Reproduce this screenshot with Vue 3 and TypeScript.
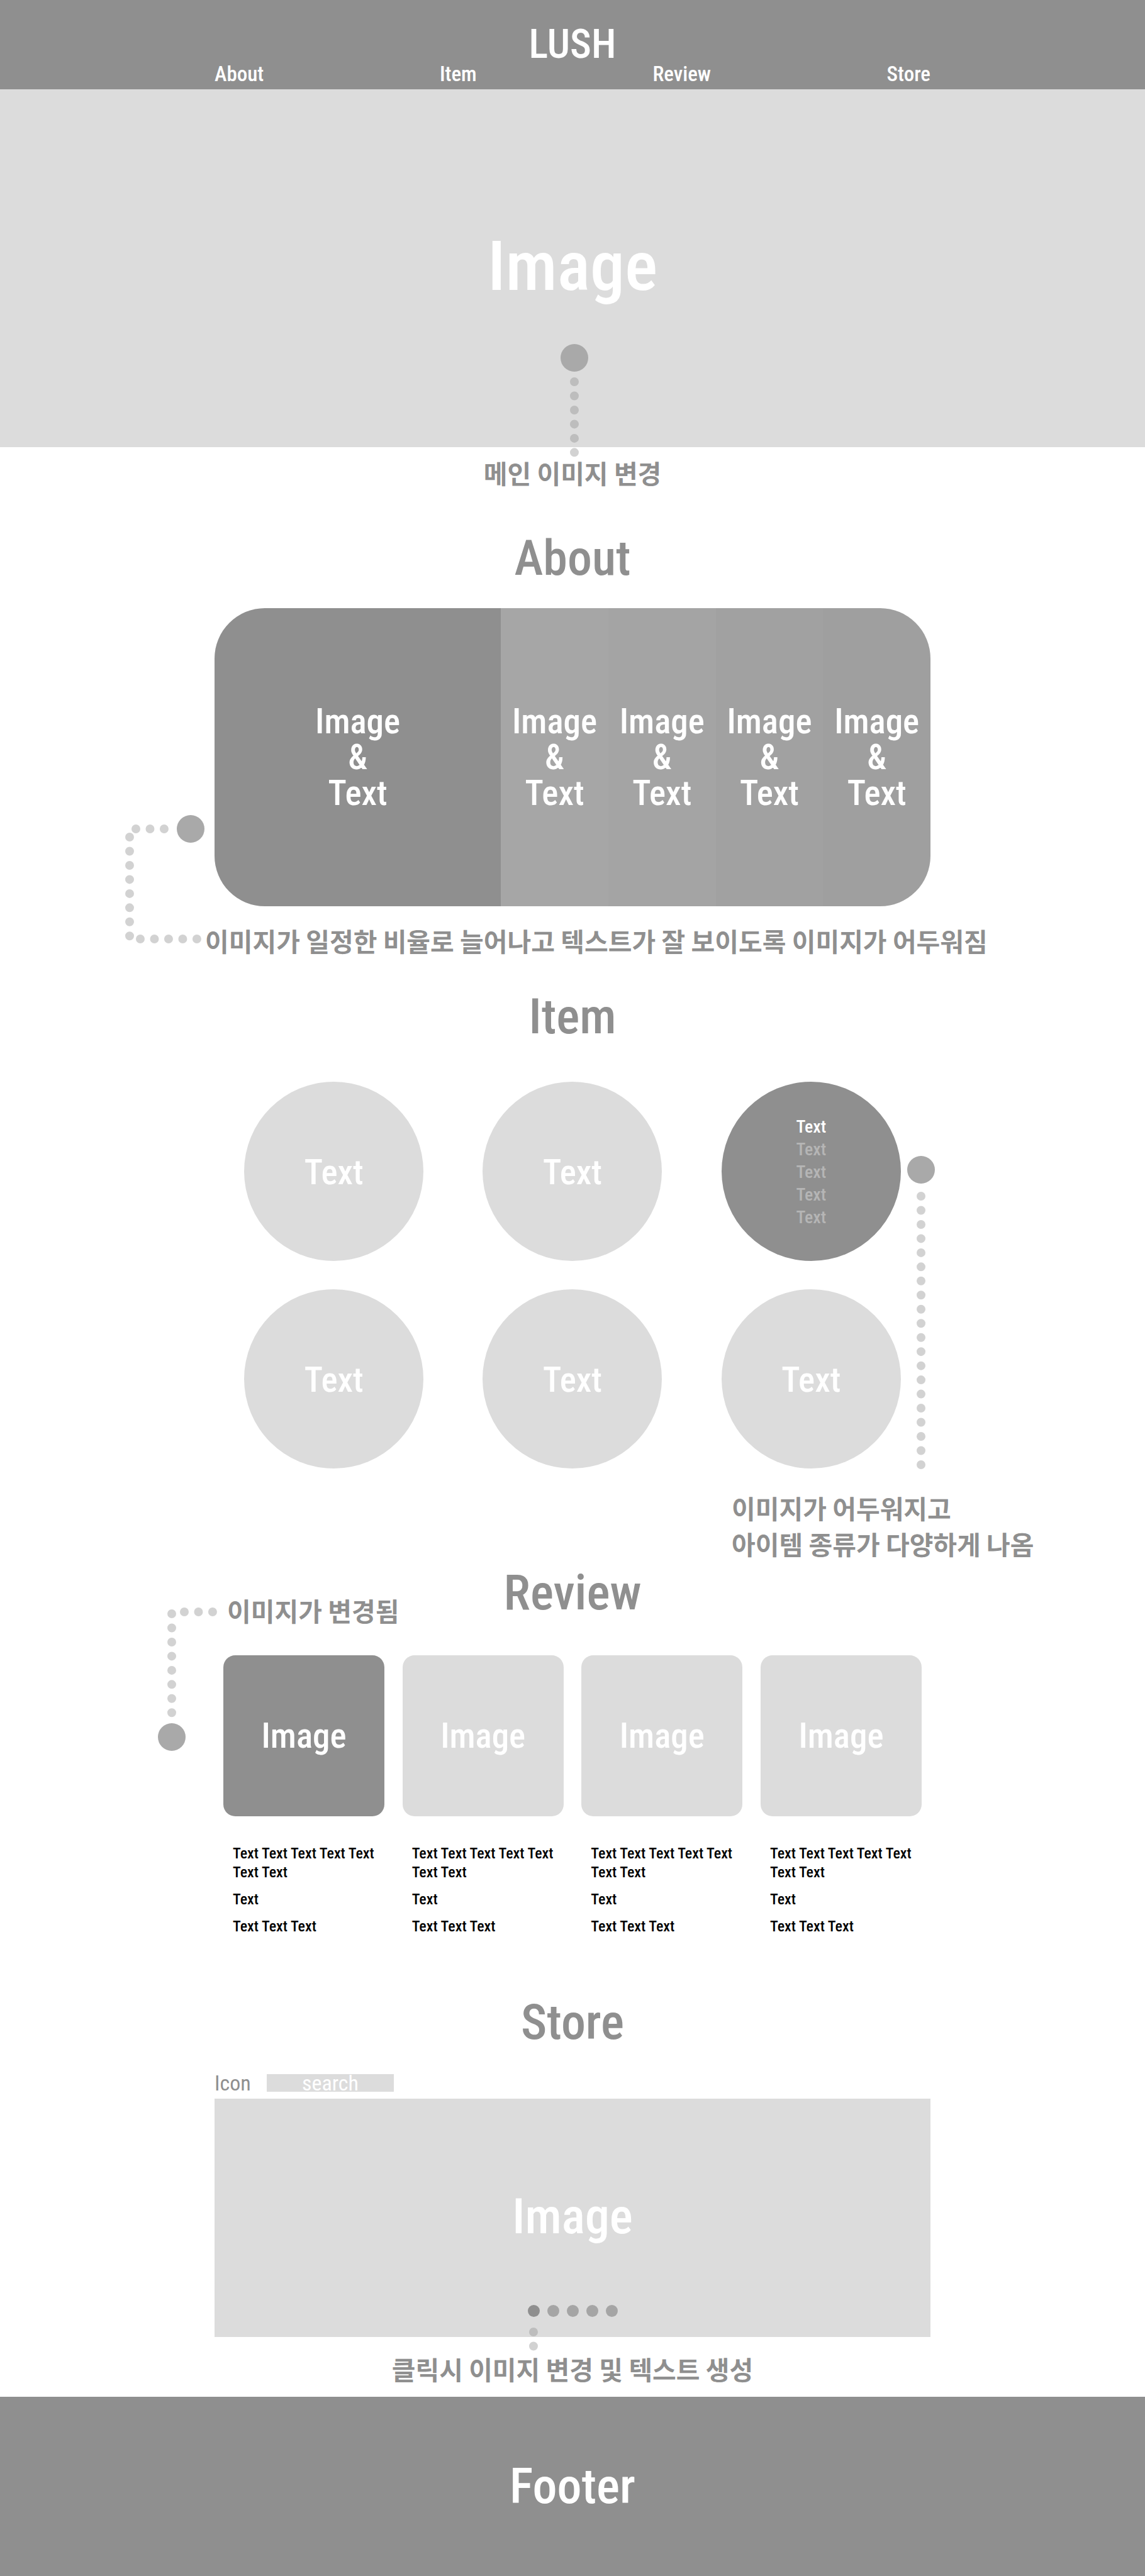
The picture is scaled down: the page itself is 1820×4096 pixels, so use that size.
<script setup lang="ts">
import { ref } from 'vue'

interface NavLink {
  label: string
  target: string
}

const navLinks: NavLink[] = [
  { label: 'About', target: '#about' },
  { label: 'Item', target: '#item' },
  { label: 'Review', target: '#review' },
  { label: 'Store', target: '#store' },
]

const panels: string[] = ['panel-open', 'panel-a', 'panel-b', 'panel-c', 'panel-d']

const items: { id: number; kinds: number }[] = [
  { id: 1, kinds: 0 },
  { id: 2, kinds: 0 },
  { id: 3, kinds: 5 },
  { id: 4, kinds: 0 },
  { id: 5, kinds: 0 },
  { id: 6, kinds: 0 },
]

const reviews: { id: number; active: boolean }[] = [
  { id: 1, active: true },
  { id: 2, active: false },
  { id: 3, active: false },
  { id: 4, active: false },
]

const slide = ref(1)
const keyword = ref('')
</script>

<template>
  <div class="page">
    <header class="site-header">
      <a class="logo" href="#top">LUSH</a>
      <nav class="nav wrap">
        <a v-for="link in navLinks" :key="link.target" :href="link.target">{{ link.label }}</a>
      </nav>
    </header>

    <main>
      <section class="hero">
        <p class="hero-label">Image</p>
        <svg class="note note-hero" width="44" height="182" viewBox="0 0 44 182" aria-hidden="true">
          <circle class="knob" cx="22" cy="22" r="22" />
          <path class="dots" d="M22 60V173" />
        </svg>
      </section>
      <p class="caption caption-hero">메인 이미지 변경</p>

      <section id="about" class="wrap about">
        <h2 class="title">About</h2>
        <div class="panel-area">
          <ul class="panels">
            <li v-for="name in panels" :key="name" :class="name">Image<br />&amp;<br />Text</li>
          </ul>
          <svg class="note note-about" width="128" height="206" viewBox="0 0 128 206" aria-hidden="true">
            <circle class="knob" cx="105" cy="22" r="22" />
            <path class="dots" d="M18 22H64M8 35V193M25 197H116" />
          </svg>
        </div>
        <p class="caption caption-about">이미지가 일정한 비율로 늘어나고 텍스트가 잘 보이도록 이미지가 어두워짐</p>
      </section>

      <section id="item" class="wrap item">
        <h2 class="title">Item</h2>
        <div class="item-area">
          <ul class="circles">
            <li v-for="item in items" :key="item.id" class="circle" :class="{ 'circle-open': item.kinds }">
              <template v-if="item.kinds">
                <span v-for="n in item.kinds" :key="n" class="kind" :class="{ 'kind-on': n === 1 }">Text</span>
              </template>
              <template v-else>Text</template>
            </li>
          </ul>
          <svg class="note note-item" width="44" height="500" viewBox="0 0 44 500" aria-hidden="true">
            <circle class="knob" cx="22" cy="22" r="22" />
            <path class="dots" d="M22 64V492" />
          </svg>
        </div>
        <p class="caption caption-item">이미지가 어두워지고<br />아이템 종류가 다양하게 나옴</p>
      </section>

      <section id="review" class="wrap review">
        <div class="review-head">
          <p class="caption caption-review">이미지가 변경됨</p>
          <h2 class="title">Review</h2>
        </div>
        <div class="review-area">
          <article v-for="review in reviews" :key="review.id" class="review-card">
            <div class="thumb" :class="{ 'thumb-on': review.active }">Image</div>
            <div class="review-text">
              <p>Text Text Text Text Text<br />Text Text</p>
              <p>Text</p>
              <p>Text Text Text</p>
            </div>
          </article>
          <svg class="note note-review" width="96" height="230" viewBox="0 0 96 230" aria-hidden="true">
            <circle class="knob" cx="22" cy="207" r="22" />
            <path class="dots" d="M42 8H88M22 11V169" />
          </svg>
        </div>
      </section>

      <section id="store" class="wrap store">
        <h2 class="title">Store</h2>
        <form class="search" @submit.prevent>
          <label for="store-search">Icon</label>
          <input id="store-search" v-model="keyword" type="text" placeholder="search" />
        </form>
        <div class="map">
          <p class="map-label">Image</p>
          <div class="pager">
            <button
              v-for="n in 5"
              :key="n"
              type="button"
              :class="{ on: slide === n }"
              :aria-label="`${n}`"
              @click="slide = n"
            ></button>
          </div>
          <svg class="note note-store" width="16" height="40" viewBox="0 0 16 40" aria-hidden="true">
            <path class="dots" d="M8 8V31" />
          </svg>
        </div>
        <p class="caption caption-store">클릭시 이미지 변경 및 텍스트 생성</p>
      </section>
    </main>

    <footer class="site-footer">Footer</footer>
  </div>
</template>

<style>
body {
  margin: 0;
  background: #fff;
}
</style>

<style scoped>
.page {
  font-family: "Roboto Condensed", "Liberation Sans Narrow", "Noto Sans CJK KR", sans-serif;
  font-weight: 500;
  color: #8f8f8f;
  overflow-x: hidden;
}

h2,
p,
ul {
  margin: 0;
  padding: 0;
  list-style: none;
}

a {
  color: inherit;
  text-decoration: none;
}

.wrap {
  box-sizing: border-box;
  width: 100%;
  max-width: 1138px;
  margin: 0 auto;
}

.site-header {
  display: flex;
  flex-direction: column;
  align-items: center;
  height: 142px;
  background: #8f8f8f;
  color: #fff;
}

.logo {
  padding-top: 40px;
  font-size: 64px;
  line-height: 62px;
}

.nav {
  display: flex;
  justify-content: space-between;
  font-size: 33px;
  line-height: 32px;
}

.hero {
  position: relative;
  display: flex;
  align-items: center;
  justify-content: center;
  height: 569px;
  background: #dcdcdc;
  color: #fff;
}

.hero-label {
  padding-bottom: 6px;
  font-size: 110px;
  line-height: 112px;
}

.title {
  padding-top: 3px;
  font-size: 78px;
  line-height: 77px;
  font-weight: 500;
  text-align: center;
}

.caption {
  font-family: "Noto Sans CJK KR", sans-serif;
  font-size: 41px;
  line-height: 57px;
  font-weight: 700;
  white-space: nowrap;
}

.note {
  position: absolute;
  display: block;
}

.knob {
  fill: #a9a9a9;
}

.dots {
  fill: none;
  stroke: #8f8f8f;
  stroke-opacity: 0.4;
  stroke-width: 14;
  stroke-linecap: round;
  stroke-dasharray: 0 22.47;
}

.note-hero {
  top: 405px;
  left: calc(50% - 19px);
}

.caption-hero {
  padding: 12px 0 2px;
  text-align: center;
}

.about {
  padding-top: 64px;
}

.panel-area,
.item-area {
  position: relative;
}

.panels {
  display: flex;
  height: 474px;
  margin-top: 41px;
  border-radius: 80px;
  overflow: hidden;
  color: #fff;
  font-size: 55px;
  line-height: 57px;
  text-align: center;
}

.panels li {
  flex: 3 1 0;
  display: flex;
  flex-direction: column;
  justify-content: center;
}

.panels .panel-open {
  flex-grow: 8;
  background: #8f8f8f;
}

.panel-a {
  background: #a6a6a6;
}

.panel-b {
  background: #a4a4a4;
}

.panel-c {
  background: #a1a1a1;
}

.panel-d {
  background: #9f9f9f;
}

.note-about {
  top: 329px;
  left: -143px;
}

.caption-about {
  padding: 26px 0 2px;
  margin-left: -15px;
}

.item {
  padding-top: 49px;
}

.circles {
  display: grid;
  grid-template-columns: repeat(3, 1fr);
  row-gap: 45px;
  justify-items: center;
  padding-top: 65px;
}

.circle {
  box-sizing: border-box;
  display: flex;
  flex-direction: column;
  align-items: center;
  justify-content: center;
  width: 285px;
  height: 285px;
  padding-top: 3px;
  border-radius: 50%;
  background: #dcdcdc;
  color: #fff;
  font-size: 55px;
  line-height: 56px;
}

.circle-open {
  background: #8f8f8f;
}

.kind {
  font-size: 28px;
  line-height: 36px;
  color: #b5b5b5;
}

.kind-on {
  color: #fff;
}

.note-item {
  top: 183px;
  left: 1101px;
}

.caption-item {
  padding: 34px 0 2px;
  margin-left: 822px;
}

.review {
  padding: 6px 14px 0;
}

.review-head {
  display: grid;
  grid-template-columns: 1fr auto 1fr;
  height: 98px;
}

.caption-review {
  align-self: end;
  padding-left: 6px;
}

.review-area {
  position: relative;
  display: flex;
  justify-content: space-between;
  padding-top: 43px;
}

.review-card {
  width: 256px;
}

.thumb {
  display: flex;
  align-items: center;
  justify-content: center;
  height: 256px;
  border-radius: 19px;
  background: #dcdcdc;
  color: #fff;
  font-size: 55px;
  line-height: 56px;
}

.thumb-on {
  background: #8f8f8f;
}

.review-text {
  display: flex;
  flex-direction: column;
  gap: 13px;
  padding: 44px 0 0 15px;
  color: #000;
  font-size: 24px;
  line-height: 30px;
  white-space: nowrap;
}

.note-review {
  top: -34px;
  left: -104px;
}

.store {
  padding-top: 96px;
}

.search {
  display: flex;
  align-items: center;
  gap: 24px;
  margin-top: 44px;
  font-size: 34px;
  line-height: 28px;
  font-weight: 400;
}

.search label {
  width: 59px;
}

.search input {
  box-sizing: border-box;
  width: 202px;
  height: 28px;
  padding: 0;
  border: 0;
  border-radius: 0;
  outline: 0;
  background: #dcdcdc;
  color: #fff;
  font: inherit;
  text-align: center;
}

.search input::placeholder {
  color: #fff;
  opacity: 1;
}

.map {
  position: relative;
  display: flex;
  align-items: center;
  justify-content: center;
  height: 379px;
  margin-top: 11px;
  background: #dcdcdc;
  color: #fff;
}

.map-label {
  padding-bottom: 4px;
  font-size: 78px;
  line-height: 80px;
}

.pager {
  position: absolute;
  right: 0;
  bottom: 32px;
  left: 0;
  display: flex;
  justify-content: center;
  gap: 12px;
}

.pager button {
  width: 19px;
  height: 19px;
  padding: 0;
  border: 0;
  border-radius: 50%;
  background: #a5a5a5;
}

.pager .on {
  background: #8f8f8f;
}

.note-store {
  top: 363px;
  left: calc(50% - 70px);
}

.caption-store {
  padding: 22px 0 16px;
  text-align: center;
}

.site-footer {
  display: flex;
  align-items: center;
  justify-content: center;
  height: 285px;
  background: #8f8f8f;
  color: #fff;
  font-size: 78px;
  line-height: 80px;
}
</style>
